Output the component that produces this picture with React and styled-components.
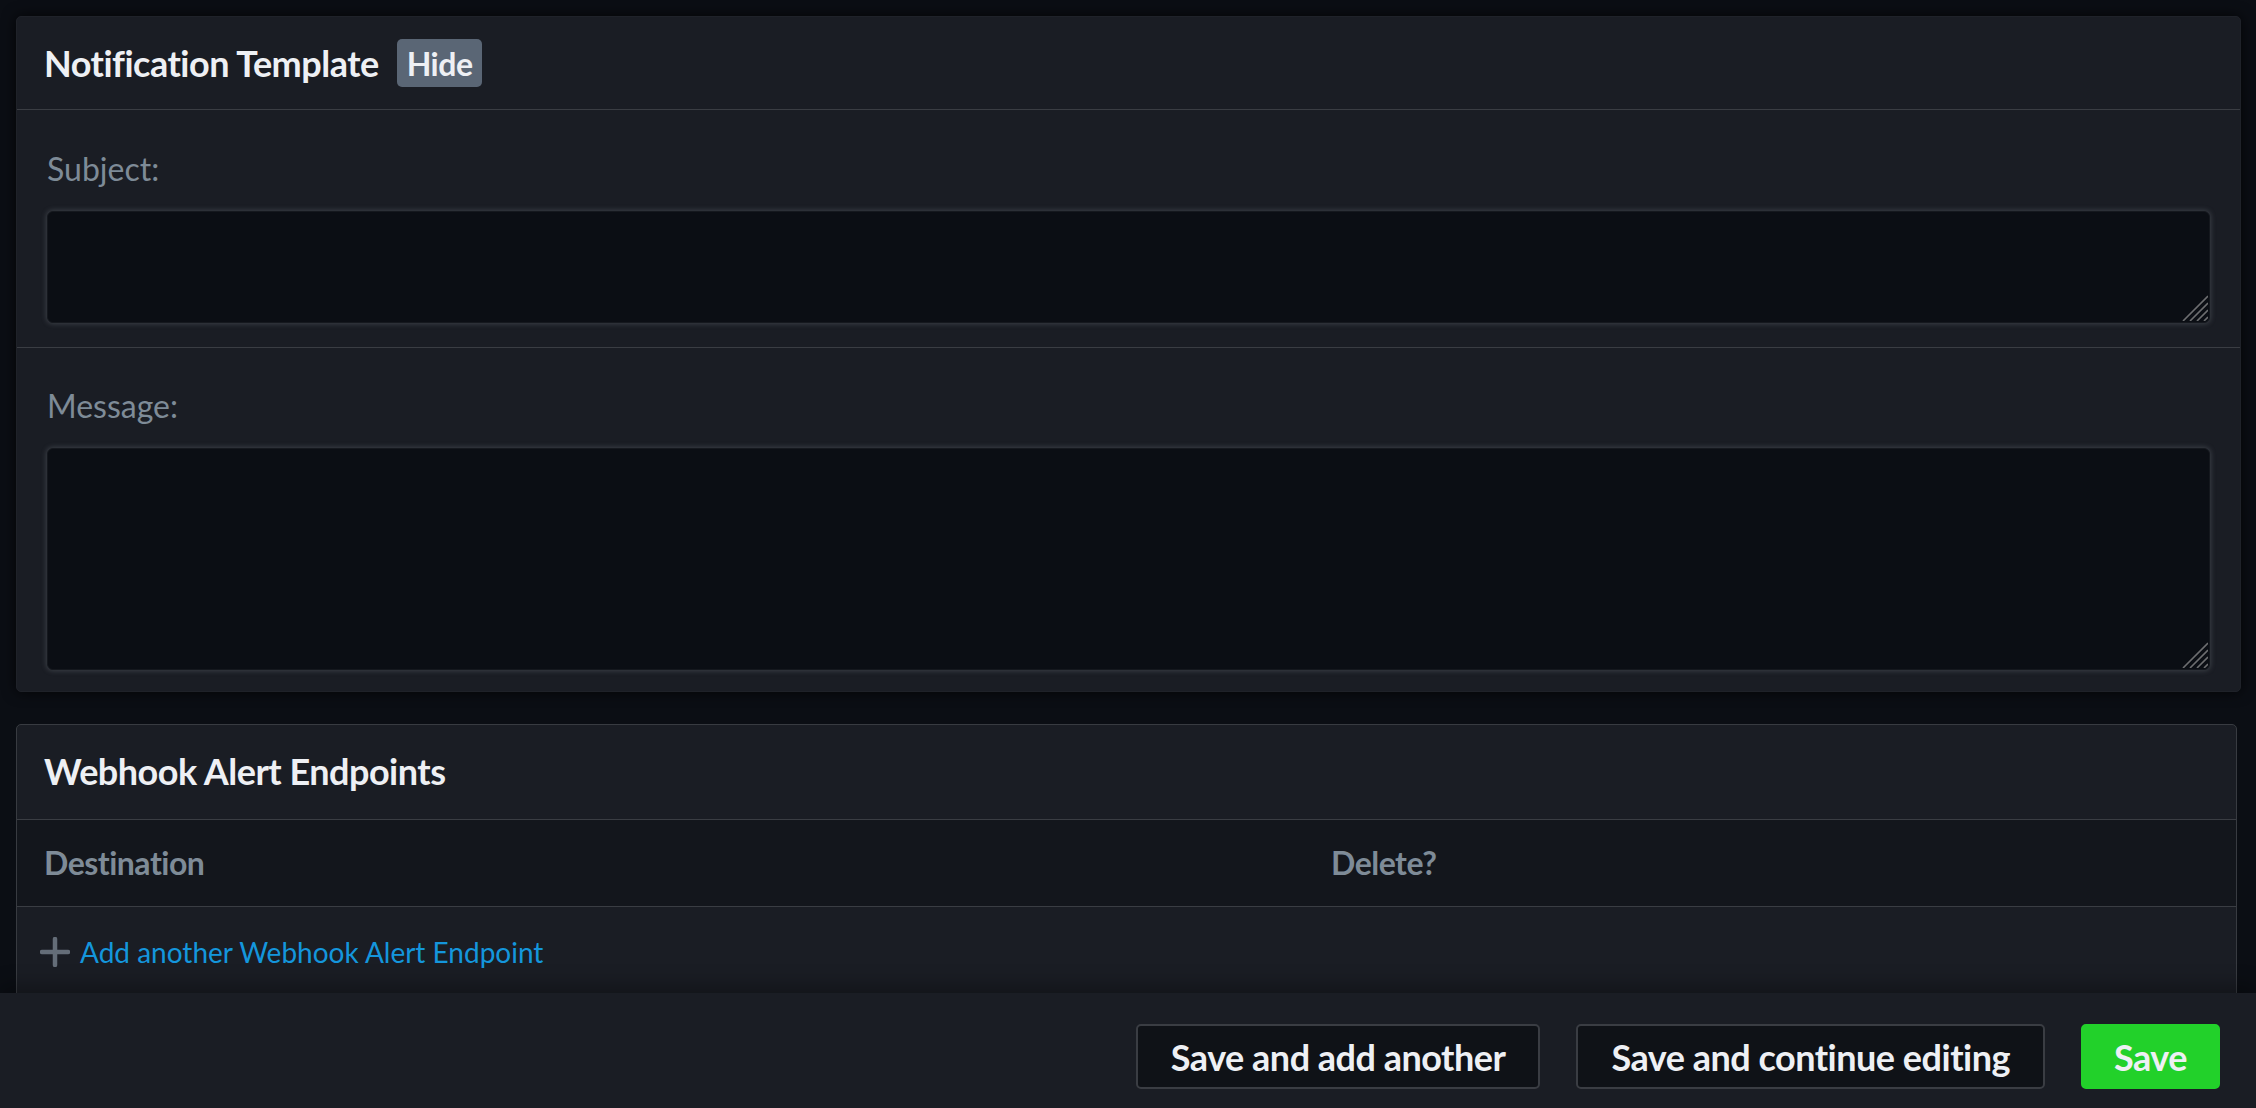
import React from "react";
import styled, { createGlobalStyle } from "styled-components";

const GlobalStyle = createGlobalStyle`
  html, body {
    margin: 0;
    padding: 0;
    background: #0b0e14;
  }
  * {
    box-sizing: border-box;
  }
`;

const heading = `
  font-family: Lato, "Open Sans", sans-serif;
  font-weight: 700;
  letter-spacing: -0.5px;
`;

const Page = styled.div`
  height: 100vh;
  display: flex;
  flex-direction: column;
  background: #0b0e14;
  overflow: hidden;
`;

const Content = styled.div`
  flex: 1;
  min-height: 0;
  overflow: hidden;
  padding: 16px 15px 0 16px;
  display: flex;
  flex-direction: column;
  gap: 32px;
`;

const Card = styled.section`
  background: #1a1d24;
  border-radius: 5px;
  border: 1px solid ${(p) => (p.outlined ? "#383b41" : "#1f2229")};
  box-shadow: ${(p) => (p.outlined ? "none" : "0 0 14px rgba(0, 0, 0, 0.75)")};
  margin-right: ${(p) => (p.outlined ? "4px" : "0")};
  flex-shrink: 0;
`;

const CardHeader = styled.div`
  display: flex;
  align-items: center;
  gap: 18px;
  padding: ${(p) => p.pad || "22px 27px 22px"};
  border-bottom: 1px solid #3a3d43;
`;

const Title = styled.h2`
  ${heading}
  margin: 0;
  font-size: 36px;
  line-height: 44px;
  color: #eef0f4;
`;

const Badge = styled.span`
  ${heading}
  display: inline-flex;
  align-items: center;
  height: 48px;
  padding: 0 10px;
  border-radius: 5px;
  background: #5a6675;
  color: #eef0f4;
  font-size: 32px;
`;

const FieldRow = styled.div`
  padding: ${(p) => p.top || "39px"} 30px ${(p) => p.bottom || "24px"};
  border-bottom: ${(p) => (p.last ? "none" : "1px solid #3a3d43")};
`;

const Label = styled.label`
  display: block;
  font-family: Lato, "Open Sans", sans-serif;
  font-size: 32px;
  line-height: 40px;
  color: #7e8b97;
  margin-bottom: 22px;
`;

const InputWrap = styled.div`
  position: relative;
`;

const TextArea = styled.textarea`
  display: block;
  width: 100%;
  height: ${(p) => p.h}px;
  background: #0b0e14;
  border: 1px solid #15181e;
  border-radius: 6px;
  box-shadow: 0 0 5px 1px rgba(120, 126, 136, 0.35);
  color: #eef0f4;
  resize: none;
  outline: none;
  font-family: Lato, sans-serif;
  font-size: 28px;
`;

const Grip = styled.svg`
  position: absolute;
  right: 2px;
  bottom: 2px;
  pointer-events: none;
`;

const ResizeGrip = () => (
  <Grip width="26" height="26" viewBox="0 0 26 26" aria-hidden="true">
    <path
      d="M26 1L1 26M26 8L8 26M26 15L15 26M26 22L22 26"
      stroke="#6d6e70"
      strokeWidth="1.6"
    />
  </Grip>
);

const TableHead = styled.div`
  display: grid;
  grid-template-columns: 58% 1fr;
  background: #13161c;
  border-bottom: 1px solid #3a3d43;
`;

const HeadCell = styled.div`
  ${heading}
  padding: 23px 27px;
  font-size: 32px;
  line-height: 40px;
  color: #7e8b97;
`;

const AddRow = styled.div`
  display: flex;
  align-items: center;
  gap: 10px;
  padding: 25px 23px 60px;
`;

const AddLink = styled.a`
  font-family: Lato, "Open Sans", sans-serif;
  font-size: 28px;
  line-height: 40px;
  color: #1496dc;
  text-decoration: none;
  cursor: pointer;
`;

const Footer = styled.footer`
  flex-shrink: 0;
  height: 115px;
  display: flex;
  justify-content: flex-end;
  align-items: flex-start;
  gap: 36px;
  padding: 31px 36px 0;
  background: #1a1d24;
  box-shadow: 0 -8px 18px rgba(0, 0, 0, 0.3);
  position: relative;
`;

const Button = styled.button`
  ${heading}
  height: 65px;
  padding: 0 ${(p) => (p.primary ? "31px" : "33px")};
  font-size: 36px;
  color: #eef0f4;
  background: ${(p) => (p.primary ? "#22d12a" : "#0f1217")};
  border: 2px solid ${(p) => (p.primary ? "#22d12a" : "#3a3d43")};
  border-radius: 5px;
  cursor: pointer;
`;

const PlusIcon = () => (
  <svg width="30" height="30" viewBox="0 0 30 30" aria-hidden="true">
    <path d="M15 2v26M2 15h26" stroke="#646d78" strokeWidth="4.5" strokeLinecap="round" />
  </svg>
);

export default function App() {
  return (
    <>
      <GlobalStyle />
      <Page>
        <Content>
          <Card>
            <CardHeader>
              <Title>Notification Template</Title>
              <Badge>Hide</Badge>
            </CardHeader>
            <FieldRow>
              <Label>Subject:</Label>
              <InputWrap>
                <TextArea h={112} />
                <ResizeGrip />
              </InputWrap>
            </FieldRow>
            <FieldRow last top="38px" bottom="21px">
              <Label>Message:</Label>
              <InputWrap>
                <TextArea h={222} />
                <ResizeGrip />
              </InputWrap>
            </FieldRow>
          </Card>

          <Card outlined>
            <CardHeader pad="24px 27px 26px">
              <Title>Webhook Alert Endpoints</Title>
            </CardHeader>
            <TableHead>
              <HeadCell>Destination</HeadCell>
              <HeadCell>Delete?</HeadCell>
            </TableHead>
            <AddRow>
              <PlusIcon />
              <AddLink>Add another Webhook Alert Endpoint</AddLink>
            </AddRow>
          </Card>
        </Content>

        <Footer>
          <Button>Save and add another</Button>
          <Button>Save and continue editing</Button>
          <Button primary>Save</Button>
        </Footer>
      </Page>
    </>
  );
}
